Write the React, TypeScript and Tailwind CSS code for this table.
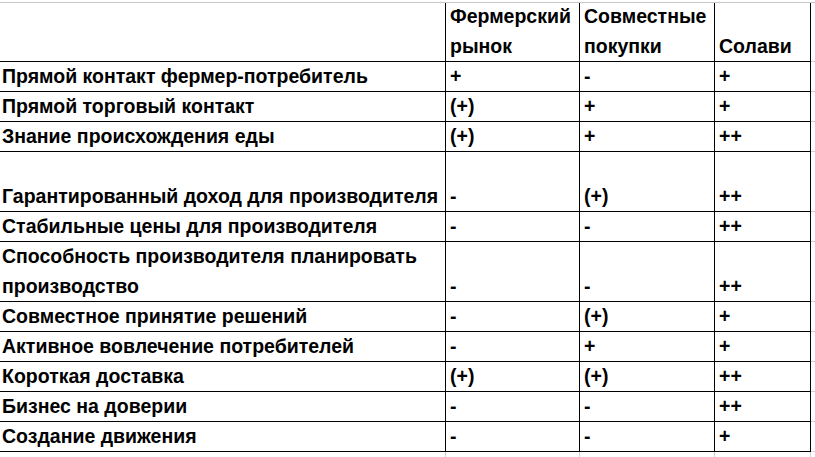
const rows: { label: string[]; a: string; b: string; c: string; tall?: boolean }[] = [
  { label: ["Прямой контакт фермер-потребитель"], a: "+", b: "-", c: "+" },
  { label: ["Прямой торговый контакт"], a: "(+)", b: "+", c: "+" },
  { label: ["Знание происхождения еды"], a: "(+)", b: "+", c: "++" },
  { label: ["Гарантированный доход для производителя"], a: "-", b: "(+)", c: "++", tall: true },
  { label: ["Стабильные цены для производителя"], a: "-", b: "-", c: "++" },
  { label: ["Способность производителя планировать", "производство"], a: "-", b: "-", c: "++", tall: true },
  { label: ["Совместное принятие решений"], a: "-", b: "(+)", c: "+" },
  { label: ["Активное вовлечение потребителей"], a: "-", b: "+", c: "+" },
  { label: ["Короткая доставка"], a: "(+)", b: "(+)", c: "++" },
  { label: ["Бизнес на доверии"], a: "-", b: "-", c: "++" },
  { label: ["Создание движения"], a: "-", b: "-", c: "+" },
];

function Cell({ lines, className }: { lines: string[]; className: string }) {
  return (
    <div className={`flex flex-col justify-end border-r border-b border-black leading-[30px] ${className}`}>
      {lines.map((l) => (
        <span key={l} className="whitespace-nowrap">
          {l}
        </span>
      ))}
    </div>
  );
}

export default function App() {
  return (
    <div
      className="w-[815px] h-[457px] overflow-hidden bg-white pt-[2px] text-[19.5px] font-bold text-black"
      style={{ fontFamily: '"Liberation Sans", Arial, sans-serif' }}
    >
      <div className="border-t border-[#c6c6c6]">
        {/* header */}
        <div className="flex h-[59px]">
          <Cell lines={[""]} className="w-[446px] pl-[2px]" />
          <Cell lines={["Фермерский", "рынок"]} className="w-[134px] pl-[4px]" />
          <Cell lines={["Совместные", "покупки"]} className="w-[135px] pl-[4px]" />
          <Cell lines={["Солави"]} className="w-[96px] pl-[4px]" />
          <div className="flex-1 border-b border-[#d4d4d4]" />
        </div>

        {rows.map((r) => (
          <div key={r.label[0]} className={`flex ${r.tall ? "h-[60px]" : "h-[30px]"}`}>
            <Cell lines={r.label} className="w-[446px] pl-[2px]" />
            <Cell lines={[r.a]} className="w-[134px] pl-[4px]" />
            <Cell lines={[r.b]} className="w-[135px] pl-[4px]" />
            <Cell lines={[r.c]} className="w-[96px] pl-[4px]" />
            <div className="flex-1 border-b border-[#d4d4d4]" />
          </div>
        ))}

        {/* spreadsheet gridlines below the table */}
        <div className="flex h-[10px]">
          <div className="w-[446px] border-r border-[#d4d4d4]" />
          <div className="w-[134px] border-r border-[#d4d4d4]" />
          <div className="w-[135px] border-r border-[#d4d4d4]" />
          <div className="w-[96px] border-r border-[#d4d4d4]" />
        </div>
      </div>
    </div>
  );
}
